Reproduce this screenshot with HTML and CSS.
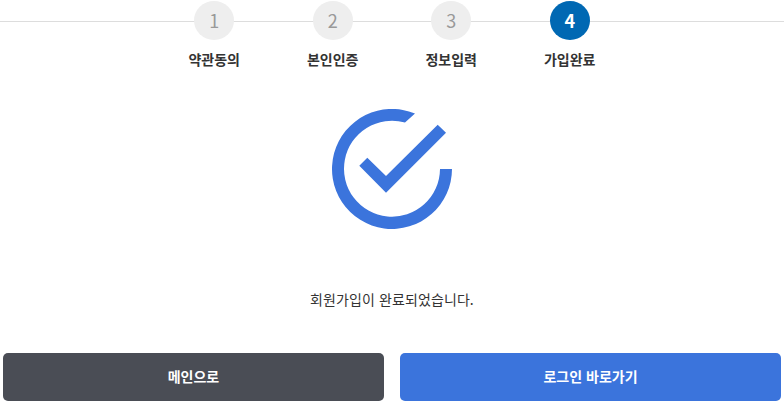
FILE: index.html
```html
<!DOCTYPE html>
<html lang="ko">
<head>
    <meta charset="UTF-8">
    <meta name="viewport" content="width=device-width, initial-scale=1.0">
    <title>가입완료</title>
    <link rel="stylesheet" href="styles.css">
</head>
<body>

<ol class="steps">
    <li class="step"><span class="step-num">1</span><span class="step-name">약관동의</span></li>
    <li class="step"><span class="step-num">2</span><span class="step-name">본인인증</span></li>
    <li class="step"><span class="step-num">3</span><span class="step-name">정보입력</span></li>
    <li class="step active"><span class="step-num">4</span><span class="step-name">가입완료</span></li>
</ol>

<div class="done">
    <svg class="done-icon" width="120" height="120" viewBox="0 0 120 120">
        <path d="M120 60A60 60 0 1 1 83 4.5L73 13.5A48 48 0 1 0 108 60Z"/>
        <path d="M27.3 56.7L35.3 48.7L54 67L105.7 15.7L114 23.7L54 83.7Z"/>
    </svg>
    <p class="done-msg">회원가입이 완료되었습니다.</p>
</div>

<div class="btn-row">
    <a class="btn btn-dark" href="#">메인으로</a>
    <a class="btn btn-blue" href="#">로그인 바로가기</a>
</div>

</body>
</html>
```

FILE: styles.css
```css
* {
    box-sizing: border-box;
}
html, body {
    height: 403px;
    overflow: hidden;
}
body {
    margin: 0;
    font-family: "Noto Sans CJK KR", "Noto Sans", sans-serif;
    background: #fff;
    color: #333;
}
.steps {
    display: flex;
    justify-content: center;
    list-style: none;
    margin: 0;
    padding: 1px 0 0;
    background: linear-gradient(#ddd, #ddd) 0 21px / 100% 1px no-repeat;
}
.step {
    width: 118.5px;
    display: flex;
    flex-direction: column;
    align-items: center;
}
.step-num {
    width: 40px;
    height: 39px;
    border-radius: 50%;
    background: #eee;
    color: #999;
    font-size: 18px;
    line-height: 39px;
    text-align: center;
}
.step-name {
    margin-top: 9px;
    font-size: 14px;
    font-weight: 700;
    line-height: 20px;
    color: #333;
}
.active .step-num {
    background: #0068b3;
    color: #fff;
    font-weight: 700;
}
.done {
    display: flex;
    flex-direction: column;
    align-items: center;
    padding-top: 40px;
}
.done-icon {
    fill: #3b74dc;
}
.done-msg {
    margin: 60px 0 0;
    font-size: 14px;
    line-height: 20px;
    letter-spacing: 0.1px;
}
.btn-row {
    display: flex;
    gap: 16px;
    padding: 0 3px;
    margin-top: 44px;
}
.btn {
    flex: 1;
    height: 48px;
    border-radius: 5px;
    color: #fff;
    font-size: 14px;
    font-weight: 700;
    line-height: 47px;
    text-align: center;
    text-decoration: none;
}
.btn-dark {
    background: #4a4d55;
}
.btn-blue {
    background: #3b74dc;
}
```
